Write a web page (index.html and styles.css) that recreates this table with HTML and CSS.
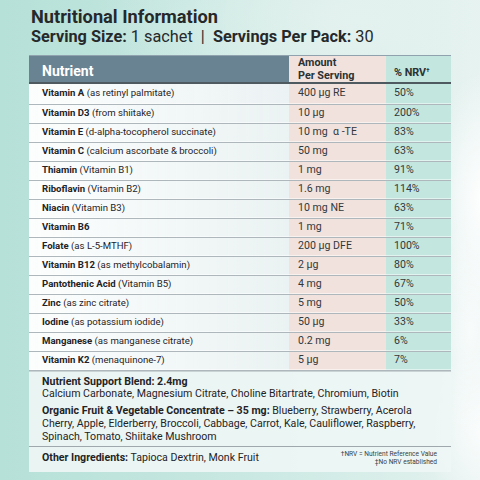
FILE: index.html
```html
<!DOCTYPE html>
<html lang="en">
<head>
  <meta charset="UTF-8" />
  <meta name="viewport" content="width=device-width, initial-scale=1.0"/>
  <title>Nutritional Information</title>
  <link rel="stylesheet" href="styles.css">
</head>
<body>
  <div class="panel">
    <h1>Nutritional Information</h1>
    <p class="serving"><b>Serving Size:</b> 1 sachet &nbsp;|&nbsp; <b>Servings Per Pack:</b> 30</p>

    <table class="facts">
      <thead>
        <tr>
          <th class="c-name">Nutrient</th>
          <th class="c-amt">Amount<br>Per Serving</th>
          <th class="c-nrv">% NRV<sup>†</sup></th>
        </tr>
      </thead>
      <tbody>
        <tr><td class="c-name"><b>Vitamin A</b> (as retinyl palmitate)</td><td class="c-amt">400 µg RE</td><td class="c-nrv">50%</td></tr>
        <tr><td class="c-name"><b>Vitamin D3</b> (from shiitake)</td><td class="c-amt">10 µg</td><td class="c-nrv">200%</td></tr>
        <tr><td class="c-name"><b>Vitamin E</b> (d-alpha-tocopherol succinate)</td><td class="c-amt">10 mg &nbsp;α -TE</td><td class="c-nrv">83%</td></tr>
        <tr><td class="c-name"><b>Vitamin C</b> (calcium ascorbate &amp; broccoli)</td><td class="c-amt">50 mg</td><td class="c-nrv">63%</td></tr>
        <tr><td class="c-name"><b>Thiamin</b> (Vitamin B1)</td><td class="c-amt">1 mg</td><td class="c-nrv">91%</td></tr>
        <tr><td class="c-name"><b>Riboflavin</b> (Vitamin B2)</td><td class="c-amt">1.6 mg</td><td class="c-nrv">114%</td></tr>
        <tr><td class="c-name"><b>Niacin</b> (Vitamin B3)</td><td class="c-amt">10 mg NE</td><td class="c-nrv">63%</td></tr>
        <tr><td class="c-name"><b>Vitamin B6</b></td><td class="c-amt">1 mg</td><td class="c-nrv">71%</td></tr>
        <tr><td class="c-name"><b>Folate</b> (as L-5-MTHF)</td><td class="c-amt">200 µg DFE</td><td class="c-nrv">100%</td></tr>
        <tr><td class="c-name"><b>Vitamin B12</b> (as methylcobalamin)</td><td class="c-amt">2 µg</td><td class="c-nrv">80%</td></tr>
        <tr><td class="c-name"><b>Pantothenic Acid</b> (Vitamin B5)</td><td class="c-amt">4 mg</td><td class="c-nrv">67%</td></tr>
        <tr><td class="c-name"><b>Zinc</b> (as zinc citrate)</td><td class="c-amt">5 mg</td><td class="c-nrv">50%</td></tr>
        <tr><td class="c-name"><b>Iodine</b> (as potassium iodide)</td><td class="c-amt">50 µg</td><td class="c-nrv">33%</td></tr>
        <tr><td class="c-name"><b>Manganese</b> (as manganese citrate)</td><td class="c-amt">0.2 mg</td><td class="c-nrv">6%</td></tr>
        <tr><td class="c-name"><b>Vitamin K2</b> (menaquinone-7)</td><td class="c-amt">5 µg</td><td class="c-nrv">7%</td></tr>
      </tbody>
    </table>

    <div class="extras">
      <div class="blend">
        <p><b>Nutrient Support Blend: 2.4mg</b><br>Calcium Carbonate, Magnesium Citrate, Choline Bitartrate, Chromium, Biotin</p>
        <p><b>Organic Fruit &amp; Vegetable Concentrate – 35 mg:</b> Blueberry, Strawberry, Acerola Cherry, Apple, Elderberry, Broccoli, Cabbage, Carrot, Kale, Cauliflower, Raspberry, Spinach, Tomato, Shiitake Mushroom</p>
      </div>
      <div class="other">
        <p><b>Other Ingredients:</b> Tapioca Dextrin, Monk Fruit</p>
        <div class="notes">
          <span>†NRV = Nutrient Reference Value</span>
          <span>‡No NRV established</span>
        </div>
      </div>
    </div>
  </div>
</body>
</html>
```

FILE: styles.css
```css
:root {
  --ink: #1f2326;
  --head: #6a8392;
  --amt: #f1e2dd;
  --nrv: #c3e7df;
  --line: #aeb7bb;
}

* {
  margin: 0;
  padding: 0;
  box-sizing: border-box;
}

body {
  width: 480px;
  height: 480px;
  overflow: hidden;
  font-family: "Roboto", "Noto Sans", sans-serif;
  color: var(--ink);
  background:
    radial-gradient(ellipse 50px 130px at 482px 200px, rgba(255, 255, 255, 0.95), rgba(255, 255, 255, 0) 100%),
    radial-gradient(ellipse 40px 110px at 470px 330px, rgba(255, 255, 255, 0.7), rgba(255, 255, 255, 0) 100%),
    radial-gradient(ellipse 60px 80px at 482px 430px, rgba(255, 255, 255, 0.8), rgba(255, 255, 255, 0) 100%),
    radial-gradient(ellipse 260px 140px at 360px 20px, #e4f2ef, rgba(228, 242, 239, 0) 100%),
    linear-gradient(90deg, #b6e1d8 0%, #c4e6df 40%, #dcefeb 85%, #e9f3f2 100%);
}

.panel {
  padding: 6px 29px 0 29px;
}

h1 {
  font-size: 18.2px;
  font-weight: 700;
  line-height: 21px;
  padding-left: 2px;
  color: #26292b;
}

.serving {
  font-size: 16.3px;
  line-height: 20px;
  padding-left: 2px;
  color: #26292b;
}

.facts {
  margin-top: 8px;
  width: 422px;
  border-collapse: collapse;
  font-size: 9.6px;
  border-top: 1px solid #8fa2ad;
}

.facts th {
  height: 27px;
  text-align: left;
  font-weight: 700;
  font-size: 10.8px;
  color: #2b3134;
  border-bottom: 2px solid #4e5a60;
  line-height: 12.5px;
  padding: 0 0 0 12px;
  vertical-align: middle;
}

.facts th.c-name {
  background: var(--head);
  color: #fff;
  font-size: 14px;
  line-height: 16px;
  padding-left: 13px;
  padding-top: 3px;
}

.facts th.c-amt {
  padding-left: 9px;
  vertical-align: top;
  padding-top: 1px;
}

.facts th.c-nrv {
  padding-left: 8px;
  padding-top: 6px;
}

.facts sup {
  font-size: 6px;
  vertical-align: 4px;
}

.facts td {
  height: 19px;
  padding: 0 0 1px 13px;
  border-bottom: 1px solid var(--line);
  box-shadow: inset 0 -1px 0 rgba(255, 255, 255, 0.5);
  white-space: nowrap;
  line-height: 14px;
}

.facts tbody tr:first-child td {
  height: 21px;
}

.c-name {
  width: 260px;
}

.c-amt {
  width: 97px;
}

td.c-name {
  background: linear-gradient(90deg, rgba(255, 255, 255, 0.96), rgba(238, 243, 244, 0.9));
}

td.c-amt {
  background: var(--amt);
  padding-left: 9px;
  font-size: 10.6px;
  color: #33383b;
}

td.c-nrv {
  background: var(--nrv);
  padding-left: 8px;
  font-size: 10.6px;
  color: #33383b;
}

th.c-amt {
  background: var(--amt);
}

th.c-nrv {
  background: var(--nrv);
}

.extras {
  width: 422px;
  background: rgba(238, 246, 245, 0.92);
  font-size: 10.6px;
  line-height: 12.8px;
  border-top: 1px solid #c9d3d4;
}

.blend {
  padding: 4px 22px 3px 13px;
  border-bottom: 1px solid #9fa9ad;
}

.blend p + p {
  margin-top: 4px;
}

.other {
  display: flex;
  justify-content: space-between;
  align-items: center;
  padding: 3px 14px 6px 13px;
}

.notes {
  display: flex;
  flex-direction: column;
  align-items: flex-end;
  font-size: 6.6px;
  line-height: 8px;
  color: #3a3f42;
}
```
